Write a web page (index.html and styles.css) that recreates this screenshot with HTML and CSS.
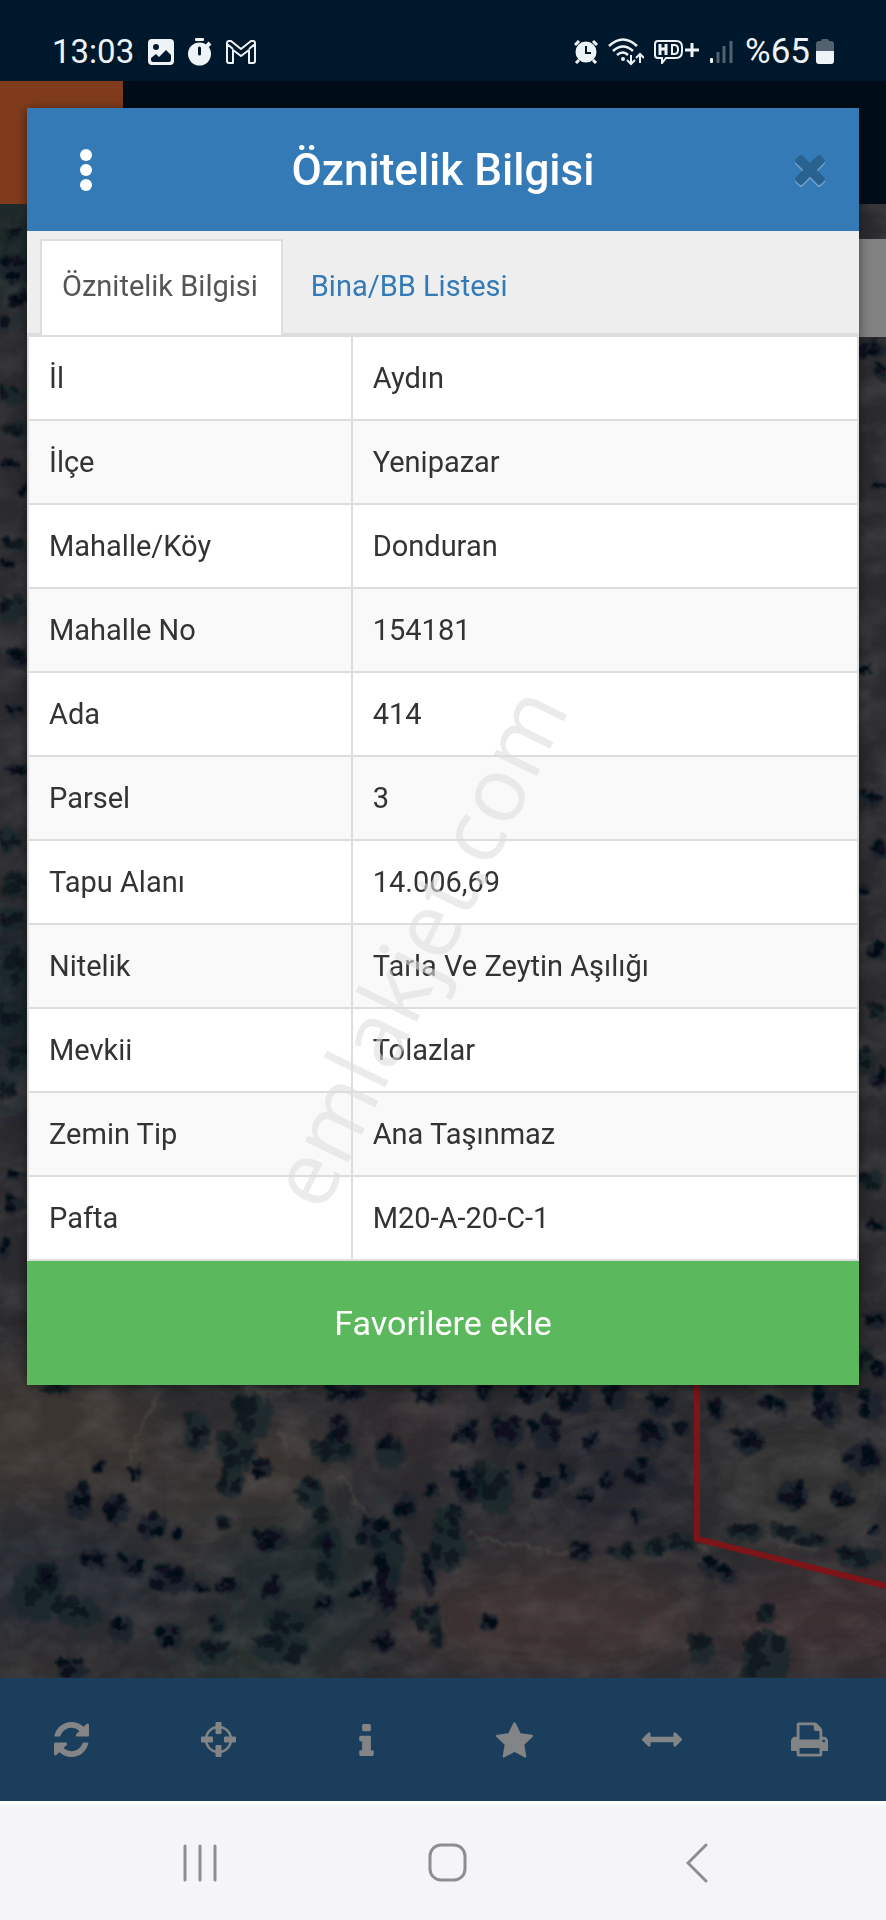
FILE: index.html
```html
<!DOCTYPE html>
<html lang="tr">
<head>
    <meta charset="UTF-8">
    <meta name="viewport" content="width=device-width, initial-scale=1.0">
    <title>Öznitelik Bilgisi</title>
    <link rel="stylesheet" href="styles.css">
</head>
<body>
    <header class="statusbar">
        <div class="status-group">
            <span>13:03</span>
            <svg class="status-icon icon-picture" width="26" height="26" viewBox="0 0 26 26">
                <path fill="#eef3f8" fill-rule="evenodd" d="M4 0h18a4 4 0 0 1 4 4v18a4 4 0 0 1-4 4H4a4 4 0 0 1-4-4V4a4 4 0 0 1 4-4zM8 5a3 3 0 1 0 0 6a3 3 0 0 0 0-6zM3 19v2q0 2 2 2h16q2 0 2-2v-5l-5-5l-7 7l-3-3z"/>
            </svg>
            <svg class="status-icon" width="24" height="28" viewBox="0 0 24 28">
                <rect x="7" y="0" width="9" height="3" rx="1" fill="#eef3f8"/>
                <path d="M19 8l3-3" stroke="#eef3f8" stroke-width="4"/>
                <circle cx="11.500" cy="16" r="11.500" fill="#eef3f8"/>
                <path d="M11.500 10v6" stroke="#00182b" stroke-width="3" stroke-linecap="round"/>
            </svg>
            <svg class="status-icon" width="30" height="24" viewBox="0 0 30 24">
                <path fill="none" stroke="#eef3f8" stroke-width="2" stroke-linejoin="round" d="M1 3q0-2 2-2h2l10 8l10-8h2q2 0 2 2v18q0 2-2 2h-4V10l-8 6l-8-6v13H3q-2 0-2-2zM1 4l6 5M29 4l-6 5"/>
            </svg>
        </div>
        <div class="status-group status-right">
            <svg width="24" height="24" viewBox="0 0 24 24">
                <circle cx="12" cy="12" r="10.500" fill="#eef3f8"/>
                <path d="M1 5l4-4M23 5l-4-4M5 20l-3 3M19 20l3 3" stroke="#eef3f8" stroke-width="3"/>
                <path d="M12 6v7h5" fill="none" stroke="#00182b" stroke-width="2"/>
            </svg>
            <svg width="36" height="28" viewBox="0 0 36 28">
                <g fill="none" stroke="#eef3f8" stroke-width="2.500">
                    <path d="M1 8q14-13 28 0"/>
                    <path d="M5 13q10-9 20 0"/>
                    <path d="M9 17q6-5 11 0"/>
                    <path d="M23 17v9M19 22l4 4l4-4M32 25V16M28 20l4-4l4 4" stroke-width="2"/>
                </g>
                <circle cx="15" cy="21" r="2" fill="#eef3f8"/>
            </svg>
            <svg width="46" height="24" viewBox="0 0 46 24">
                <g fill="none" stroke="#eef3f8" stroke-width="2">
                    <path d="M4 1h18q6 0 6 6v4q0 7-6 7H12l-4 5v-5H4q-3 0-3-3V4q0-3 3-3z"/>
                    <path d="M6 4v11M12 4v11M6 9h6" stroke-width="3"/>
                    <path d="M18 5v9h2q4 0 4-4v-1q0-4-4-4z"/>
                    <path d="M31 10h14M38 3v14" stroke-width="3"/>
                </g>
            </svg>
            <svg class="icon-signal" width="23" height="24" viewBox="0 0 23 24">
                <rect x="0" y="18" width="3" height="5" rx="1" fill="#eef3f8"/>
                <path d="M8 12v11M14 6v17M21 1v22" stroke="#53626e" stroke-width="3"/>
            </svg>
            <span>%65</span>
            <svg class="icon-battery" width="18" height="26" viewBox="0 0 18 26">
                <path fill="#53626e" d="M5 2q0-2 2-2h4q2 0 2 2h2q3 0 3 3v8H0V5q0-3 3-3z"/>
                <path fill="#eef3f8" d="M0 12h18v10q0 3-3 3H3q-3 0-3-3z"/>
            </svg>
        </div>
    </header>

    <div class="appbar"><div class="appbar-menu"></div></div>

    <main class="map">
        <svg class="map-image" viewBox="0 204 886 1474" preserveAspectRatio="xMidYMax slice">
            <defs>
                <filter id="soft" x="-50%" y="-50%" width="200%" height="200%"><feGaussianBlur stdDeviation="24"/></filter>
                <filter id="rough" filterUnits="userSpaceOnUse" x="0" y="204" width="886" height="1474">
                    <feTurbulence type="fractalNoise" baseFrequency="0.12" numOctaves="3" seed="4"/>
                    <feDisplacementMap in="SourceGraphic" scale="12" xChannelSelector="R" yChannelSelector="G"/>
                    <feGaussianBlur stdDeviation="1.2"/>
                </filter>
                <filter id="grain" x="0" y="0" width="100%" height="100%">
                    <feTurbulence type="fractalNoise" baseFrequency="0.025 0.04" numOctaves="5" seed="9"/>
                    <feColorMatrix values="0 0 0 0 0.5  0 0 0 0 0.46  0 0 0 0 0.44  1.6 0 0 0 -0.6"/>
                </filter>
            </defs>
            <rect y="204" width="886" height="1474" fill="#2b2b2f"/>
            <g filter="url(#soft)">
                <ellipse cx="40" cy="1430" rx="120" ry="70" fill="#3a3533"/>
                <ellipse cx="190" cy="1500" rx="60" ry="60" fill="#363331"/>
                <ellipse cx="60" cy="1580" rx="120" ry="60" fill="#252a30"/>
                <ellipse cx="300" cy="1580" rx="90" ry="80" fill="#24292e"/>
                <ellipse cx="280" cy="1470" rx="50" ry="50" fill="#3a3531"/>
                <ellipse cx="410" cy="1420" rx="50" ry="40" fill="#33292f"/>
                <ellipse cx="620" cy="1480" rx="90" ry="60" fill="#28282e"/>
                <ellipse cx="800" cy="1480" rx="90" ry="60" fill="#303030"/>
                <ellipse cx="560" cy="1620" rx="150" ry="55" fill="#3d3233"/>
                <ellipse cx="830" cy="1620" rx="110" ry="50" fill="#3a2e33"/>
                <ellipse cx="40" cy="1670" rx="70" ry="20" fill="#353331"/>
                <ellipse cx="250" cy="1665" rx="80" ry="20" fill="#26302d"/>
                <ellipse cx="0" cy="250" rx="40" ry="60" fill="#182528"/>
                <ellipse cx="0" cy="1010" rx="40" ry="90" fill="#142429"/>
            </g>
            <rect y="204" width="886" height="1474" filter="url(#grain)" opacity="0.16"/>
            <g fill="none" stroke="#5b524c" stroke-width="3" opacity="0.45" filter="url(#rough)">
                <path d="M160 1392q-22 40-30 70M245 1388q30 8 62-2M278 1430q10 10 8 20M340 1475q12 12 14 24q12 14 14 20"/>
                <path d="M468 1532q30 12 58 14l46 10M700 1545l10 6M780 1545l40 4"/>
            </g>
            <g id="trees" filter="url(#rough)"></g>
            <path d="M697 1380v159L886 1586" fill="none" stroke="#7c1418" stroke-width="6"/>
        </svg>
        <div class="map-control"></div>
    </main>

    <nav class="toolbar">
        <button type="button" aria-label="Yenile">
            <svg width="35" height="35" viewBox="0 0 1536 1536"><path d="M1511 928q0 5-1 7-64 268-268 434.500t-478 166.500q-146 0-282.500-55t-243.500-157l-129 129q-19 19-45 19t-45-19-19-45v-448q0-26 19-45t45-19h448q26 0 45 19t19 45-19 45l-137 137q71 66 161 102t187 36q134 0 250-65t186-179q11-17 53-117 8-23 30-23h192q13 0 22.500 9.500t9.500 22.500zm25-800v448q0 26-19 45t-45 19h-448q-26 0-45-19t-19-45 19-45l138-138q-148-137-349-137-134 0-250 65t-186 179q-11 17-53 117-8 23-30 23h-199q-13 0-22.500-9.500t-9.500-22.500v-7q65-268 270-434.500t480-166.500q146 0 284 55.500t245 156.500l130-129q19-19 45-19t45 19 19 45z"/></svg>
        </button>
        <button type="button" aria-label="Konum">
            <svg width="35" height="35" viewBox="0 0 35 35">
                <circle cx="17.500" cy="17.500" r="12.500" fill="none" stroke="#828486" stroke-width="2.500"/>
                <rect x="14.500" y="0" width="6" height="12" rx="1"/><rect x="14.500" y="23" width="6" height="12" rx="1"/>
                <rect x="0" y="14.500" width="12" height="6" rx="1"/><rect x="23" y="14.500" width="12" height="6" rx="1"/>
            </svg>
        </button>
        <button type="button" aria-label="Bilgi">
            <svg width="15" height="32" viewBox="0 128 640 1408"><path d="M640 1344v128q0 26-19 45t-45 19h-512q-26 0-45-19t-19-45v-128q0-26 19-45t45-19h64v-384h-64q-26 0-45-19t-19-45v-128q0-26 19-45t45-19h384q26 0 45 19t19 45v576h64q26 0 45 19t19 45zm-128-1152v192q0 26-19 45t-45 19h-256q-26 0-45-19t-19-45v-192q0-26 19-45t45-19h256q26 0 45 19t19 45z"/></svg>
        </button>
        <button type="button" aria-label="Favoriler">
            <svg width="37" height="36" viewBox="0 0 1664 1600"><path d="M1664 615q0 22-26 48l-363 354 86 500q1 7 1 20 0 21-10.500 35.500t-30.500 14.500q-19 0-40-12l-449-236-449 236q-22 12-40 12-21 0-31.500-14.500t-10.500-35.500q0-6 2-20l86-500-364-354q-25-27-25-48 0-37 56-46l502-73 225-455q19-41 49-41t49 41l225 455 502 73q56 9 56 46z"/></svg>
        </button>
        <button type="button" aria-label="Ölçüm">
            <svg width="40" height="15" viewBox="0 320 1792 640"><path d="M1792 640q0 26-19 45l-256 256q-19 19-45 19t-45-19-19-45v-128h-1024v128q0 26-19 45t-45 19-45-19l-256-256q-19-19-19-45t19-45l256-256q19-19 45-19t45 19 19 45v128h1024v-128q0-26 19-45t45-19 45 19l256 256q19 19 19 45z"/></svg>
        </button>
        <button type="button" aria-label="Yazdır">
            <svg width="37" height="35" viewBox="0 128 1664 1536"><path d="M384 1536h896v-256h-896v256zm0-640h896v-384h-160q-40 0-68-28t-28-68v-160h-640v640zm1152 64q0-26-19-45t-45-19-45 19-19 45 19 45 45 19 45-19 19-45zm128 0v416q0 13-9.500 22.500t-22.500 9.500h-224v160q0 40-28 68t-68 28h-960q-40 0-68-28t-28-68v-160h-224q-13 0-22.500-9.500t-9.500-22.500v-416q0-79 56.500-135.500t135.500-56.500h64v-544q0-40 28-68t68-28h672q40 0 88 20t76 48l152 152q28 28 48 76t20 88v256h64q79 0 135.500 56.500t56.500 135.500z"/></svg>
        </button>
    </nav>

    <nav class="sysnav">
        <button type="button" aria-label="Son uygulamalar">
            <svg width="36" height="38" viewBox="0 0 36 38"><path d="M3 2v34M18 2v34M33 2v34"/></svg>
        </button>
        <button type="button" aria-label="Ana ekran">
            <svg width="40" height="40" viewBox="0 0 40 40"><rect x="2" y="2" width="35" height="35" rx="11"/></svg>
        </button>
        <button type="button" aria-label="Geri">
            <svg width="22" height="40" viewBox="0 0 22 40"><path d="M20 2L2 20l18 18"/></svg>
        </button>
    </nav>

    <section class="dialog" role="dialog" aria-labelledby="dialogTitle">
        <div class="dialog-header">
            <button type="button" class="menu-btn" aria-label="Menü">
                <svg width="12" height="42" viewBox="0 0 12 42" fill="#fff"><circle cx="6" cy="6" r="6"/><circle cx="6" cy="21" r="6"/><circle cx="6" cy="36" r="6"/></svg>
            </button>
            <h1 id="dialogTitle">Öznitelik Bilgisi</h1>
            <button type="button" class="close-btn" aria-label="Kapat">
                <svg width="30" height="30" viewBox="0 0 1188 1188"><path fill="#29628f" d="M1188 956q0 40-28 68l-136 136q-28 28-68 28t-68-28l-294-294-294 294q-28 28-68 28t-68-28l-136-136q-28-28-28-68t28-68l294-294-294-294q-28-28-28-68t28-68l136-136q28-28 68-28t68 28l294 294 294-294q28-28 68-28t68 28l136 136q28 28 28 68t-28 68l-294 294 294 294q28 28 28 68z"/></svg>
            </button>
        </div>

        <div class="tabs">
            <a href="#oznitelik" class="tab active">Öznitelik Bilgisi</a>
            <a href="#bina" class="tab">Bina/BB Listesi</a>
        </div>

        <table class="info-table" id="oznitelik">
            <tbody>
                <tr><th scope="row">İl</th><td>Aydın</td></tr>
                <tr><th scope="row">İlçe</th><td>Yenipazar</td></tr>
                <tr><th scope="row">Mahalle/Köy</th><td>Donduran</td></tr>
                <tr><th scope="row">Mahalle No</th><td>154181</td></tr>
                <tr><th scope="row">Ada</th><td>414</td></tr>
                <tr><th scope="row">Parsel</th><td>3</td></tr>
                <tr><th scope="row">Tapu Alanı</th><td>14.006,69</td></tr>
                <tr><th scope="row">Nitelik</th><td>Tarla Ve Zeytin Aşılığı</td></tr>
                <tr><th scope="row">Mevkii</th><td>Tolazlar</td></tr>
                <tr><th scope="row">Zemin Tip</th><td>Ana Taşınmaz</td></tr>
                <tr><th scope="row">Pafta</th><td>M20-A-20-C-1</td></tr>
            </tbody>
        </table>

        <button type="button" class="favorite-btn">Favorilere ekle</button>
        <div class="watermark">emlakjet.com</div>
    </section>

    <script src="map.js"></script>
</body>
</html>
```

FILE: styles.css
```css
* {
    box-sizing: border-box;
}
body {
    margin: 0;
    min-height: 100vh;
    display: flex;
    flex-direction: column;
    position: relative;
    font-family: Roboto, "Noto Sans", sans-serif;
    font-size: 29px;
    color: #333;
    background: #00182b;
}
button {
    border: none;
    padding: 0;
    background: none;
    font-family: inherit;
    cursor: pointer;
}
svg {
    display: block;
}

/* status bar */
.statusbar {
    height: 81px;
    padding: 22px 52px 0;
    display: flex;
    justify-content: space-between;
    align-items: center;
    background: #00182b;
    color: #eef3f8;
    font-size: 33px;
}
.status-group {
    display: flex;
    align-items: center;
    gap: 14px;
}
.status-right {
    gap: 10px;
    font-size: 35px;
}
.icon-signal {
    margin-right: 2px;
}
.icon-battery {
    margin-left: -4px;
}

/* map */
.appbar {
    height: 123px;
    background: #000d18;
}
.appbar-menu {
    width: 123px;
    height: 100%;
    background: #803b1c;
}
.map {
    flex: 1;
    position: relative;
    overflow: hidden;
    background: #2e2d30;
}
.map-image {
    position: absolute;
    width: 100%;
    height: 100%;
}
.map-control {
    position: absolute;
    top: 35px;
    right: 0;
    width: 98px;
    height: 98px;
    background: #828282;
}

/* bottom bars */
.toolbar {
    height: 123px;
    display: grid;
    grid-template-columns: repeat(6, 1fr);
    background: #1b3e5c;
}
.toolbar button,
.sysnav button {
    display: flex;
    justify-content: center;
    align-items: center;
}
.toolbar svg {
    margin-right: 5px;
    fill: #828486;
}
.sysnav {
    height: 119px;
    padding: 0 65px 0 76px;
    display: grid;
    grid-template-columns: repeat(3, 1fr);
    border-top: 4px solid #fdfdfe;
    background: #f5f5f8;
}
.sysnav svg {
    fill: none;
    stroke: #8e8e90;
    stroke-width: 3;
    stroke-linecap: round;
}

/* dialog */
.dialog {
    position: absolute;
    top: 108px;
    left: 27px;
    right: 27px;
    background: #fff;
    box-shadow: 0 2px 10px rgba(0, 0, 0, 0.5);
}
.dialog-header {
    height: 123px;
    display: grid;
    grid-template-columns: 118px 1fr 118px;
    align-items: center;
    background: #337ab7;
    color: #fff;
}
.dialog-header h1 {
    margin: 0;
    font-size: 44px;
    line-height: 48px;
    font-weight: 500;
    text-align: center;
}
.menu-btn,
.close-btn {
    height: 100%;
    display: flex;
    justify-content: center;
    align-items: center;
}
.close-btn {
    padding-left: 20px;
}
.close-btn svg {
    filter: drop-shadow(0 2px 0 rgba(255, 255, 255, 0.3));
}
.tabs {
    padding: 8px 13px 0;
    display: flex;
    gap: 6px;
    background: #eee;
    border-bottom: 2px solid #ddd;
}
.tab {
    height: 96px;
    margin-bottom: -2px;
    padding: 0 23px 0 20px;
    border: 2px solid transparent;
    border-bottom: none;
    line-height: 90px;
    color: #337ab7;
    text-decoration: none;
}
.tab.active {
    background: #fff;
    border-color: #ddd;
    color: #555;
}
.info-table {
    width: 100%;
    border-collapse: collapse;
    table-layout: fixed;
}
.info-table th,
.info-table td {
    height: 84px;
    padding: 0 20px;
    border: 2px solid #ddd;
    font-weight: normal;
    text-align: left;
}
.info-table th {
    width: 39%;
}
.info-table tr:nth-child(even) {
    background: #f9f9f9;
}
.favorite-btn {
    display: block;
    width: 100%;
    height: 124px;
    background: #5cb85c;
    color: #fff;
    font-size: 34px;
}
.watermark {
    position: absolute;
    top: 838px;
    left: 388px;
    transform: translate(-50%, -50%) rotate(-64deg);
    font-family: "Open Sans", sans-serif;
    font-size: 90px;
    line-height: 1;
    color: rgba(222, 222, 222, 0.6);
    pointer-events: none;
}
```

FILE: map.js
```js
// x, y, rx, ry, crown colour (d: dark, g: green)
const TREES = [
    [430,1395,12,9,'d'],[485,1393,8,9,'d'],[532,1393,12,9,'d'],[550,1393,5,5,'d'],[575,1402,15,12,'d'],
    [617,1398,10,12,'d'],[662,1405,13,13,'d'],[467,1433,13,12,'d'],[508,1432,15,15,'d'],[547,1434,14,17,'d'],
    [592,1442,8,9,'d'],[653,1435,15,14,'d'],[682,1430,7,7,'d'],[523,1469,5,6,'d'],[470,1485,16,18,'d'],[494,1490,19,24,'g'],
    [547,1487,12,11,'d'],[567,1475,8,9,'d'],[587,1497,9,9,'d'],[608,1482,6,9,'d'],[640,1472,15,13,'d'],
    [636,1517,5,6,'d'],[433,1490,5,6,'d'],[717,1410,9,11,'d'],[767,1403,7,9,'d'],[782,1407,6,8,'d'],
    [750,1442,15,13,'d'],[827,1408,14,19,'d'],[872,1407,12,14,'d'],[863,1457,18,16,'d'],[793,1495,15,15,'d'],
    [842,1495,12,13,'d'],[873,1530,6,5,'d'],[747,1532,18,9,'g'],[787,1532,16,7,'g'],[813,1540,18,6,'g'],
    [860,1557,22,11,'g'],[623,1552,13,7,'g'],[655,1548,13,8,'g'],[682,1543,14,9,'g'],[582,1553,9,10,'d'],
    [448,1547,18,24,'g'],[450,1517,15,12,'g'],[430,1577,7,18,'d'],[708,1567,9,10,'d'],[728,1575,9,10,'d'],
    [767,1612,9,10,'g'],[767,1658,24,28,'g'],[702,1650,12,14,'g'],[488,1622,8,9,'d'],[437,1637,7,12,'g'],
    [254,1417,19,22,'g'],[198,1433,13,18,'g'],[237,1452,20,20,'g'],[232,1482,13,16,'g'],[263,1470,11,10,'d'],
    [341,1430,10,16,'d'],[333,1452,22,10,'g'],[390,1453,15,16,'g'],[347,1393,18,9,'d'],[99,1467,5,6,'d'],
    [136,1475,7,6,'d'],[79,1503,13,18,'d'],[116,1510,13,15,'d'],[152,1527,15,12,'d'],[176,1534,6,6,'d'],
    [271,1540,16,13,'d'],[223,1523,7,8,'g'],[311,1493,13,16,'g'],[322,1517,10,12,'g'],[330,1547,12,20,'g'],
    [328,1572,10,14,'g'],[376,1533,16,15,'d'],[390,1557,15,22,'g'],[387,1587,12,26,'d'],[366,1590,13,8,'d'],
    [407,1507,9,13,'d'],[93,1560,14,9,'d'],[133,1567,12,12,'d'],[172,1580,20,13,'d'],[200,1587,8,6,'d'],
    [226,1586,12,6,'d'],[274,1587,9,11,'d'],[37,1593,26,28,'g'],[79,1613,22,13,'g'],[121,1630,12,12,'d'],
    [170,1637,12,13,'d'],[218,1625,8,9,'g'],[288,1623,25,12,'g'],[282,1650,28,14,'g'],[212,1652,20,12,'g'],
    [325,1603,9,9,'d'],[384,1642,11,10,'d'],[427,1617,14,14,'g'],[73,1670,14,10,'d'],[55,1388,16,6,'g'],
    // edges of the map beside the dialog
    [16,235,10,8,'g'],[16,270,14,14,'d'],[20,300,12,8,'d'],[4,325,6,6,'d'],[12,395,14,8,'g'],[18,430,12,8,'g'],
    [10,465,10,5,'d'],[24,490,5,5,'d'],[16,545,12,6,'g'],[6,565,8,5,'d'],[12,610,14,12,'g'],[20,660,12,10,'d'],
    [14,710,10,6,'d'],[16,770,12,5,'d'],[8,840,12,12,'g'],[18,885,12,14,'g'],[10,920,14,12,'g'],[14,970,14,20,'g'],
    [10,1020,14,16,'g'],[20,1060,12,12,'g'],[8,1090,10,8,'g'],[16,1175,10,5,'d'],[14,1205,12,10,'d'],[4,1250,6,9,'d'],
    [872,350,14,8,'d'],[882,372,6,8,'d'],[878,485,6,4,'d'],[866,670,5,4,'d'],[872,800,12,7,'d'],[880,850,8,8,'d'],
    [864,890,6,6,'d'],[876,950,10,9,'d'],[880,1010,10,10,'g'],[866,1060,9,12,'g'],[880,1080,8,10,'d'],
    [870,1180,12,10,'g'],[874,1225,10,6,'d'],[876,1320,12,9,'d'],[866,1360,9,12,'g'],[880,1370,9,9,'d']
];

const NS = 'http://www.w3.org/2000/svg';
const layer = document.getElementById('trees');
let seed = 17;

function random() {
    seed = (seed * 16807) % 2147483647;
    return seed / 2147483647;
}

function blob(x, y, rx, ry, fill, opacity) {
    const el = document.createElementNS(NS, 'ellipse');
    el.setAttribute('cx', x);
    el.setAttribute('cy', y);
    el.setAttribute('rx', rx);
    el.setAttribute('ry', ry);
    el.setAttribute('fill', fill);
    el.setAttribute('opacity', opacity);
    layer.appendChild(el);
}

TREES.forEach(([x, y, rx, ry, type]) => {
    blob(x, y, rx, ry, type === 'g' ? '#17282b' : '#17212a', 0.8);
    // shadows fall to the upper left of each crown
    for (let i = 0; i < 5; i++) {
        const dx = (random() * 1.5 - 0.95) * rx;
        const dy = (random() * 1.5 - 0.95) * ry;
        blob(x + dx, y + dy, rx * 0.3 + 1, ry * 0.3 + 1, '#060e18', type === 'g' ? 0.5 : 0.8);
    }
});
```
